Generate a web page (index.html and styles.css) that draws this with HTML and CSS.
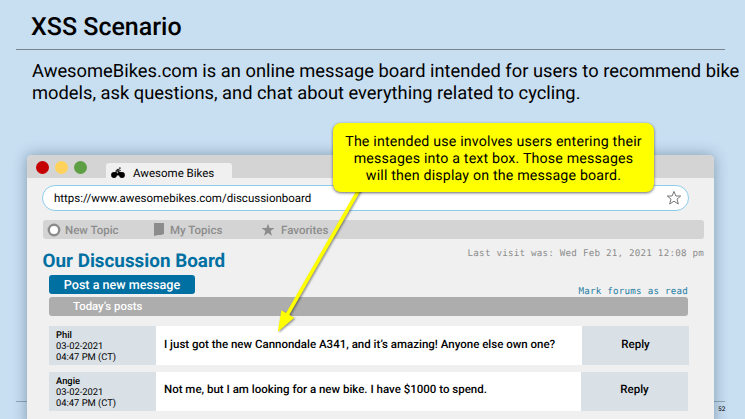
FILE: index.html
```html
<!DOCTYPE html>
<html lang="en">
<head>
<meta charset="utf-8">
<title>XSS Scenario</title>
<link rel="stylesheet" href="styles.css">
</head>
<body>
<main class="slide">
  <header class="slide-head"><h1><span>XSS Scenario</span></h1></header>
  <p class="intro"><span>AwesomeBikes.com is an online message board intended for users to recommend bike</span><br><span>models, ask questions, and chat about everything related to cycling.</span></p>

  <section class="window">
    <div class="tabbar">
      <i class="dot red"></i><i class="dot yellow"></i><i class="dot green"></i>
      <div class="tab">
        <svg class="bike" viewBox="0 0 14 12"><circle cx="3" cy="8" r="2.9"/><circle cx="11" cy="8" r="2.9"/><path d="M3 8 4.6 4.5 7.5 3.9 10.6 5.6 9.5 8.4H4.5z"/><path d="M4 4.2 6.4 1.7 8.6 2.1 7.4 4.8z" fill="#333"/><path d="M7.5 3 10 3.6" stroke="#222" stroke-width=".8"/><circle cx="8.9" cy="1.1" r=".9" fill="#333"/><path d="M5.4 5 6.6 4.6 7.4 5.8 6.3 6.4z" fill="#aaa"/></svg>
        <span>Awesome Bikes</span>
      </div>
    </div>
    <div class="page">
      <div class="url"><span>https://www.awesomebikes.com/discussionboard</span>
        <svg class="outline-star" viewBox="0 0 16 16"><path d="M8 1.4 9.9 6H14.7L11 9.1 12.3 14 8 11.2 3.7 14 5 9.1 1.3 6H6.1z"/></svg>
      </div>
      <nav class="nav">
        <div class="nav-item topic"><svg viewBox="0 0 14 14" width="14" height="14"><circle cx="7" cy="7" r="5.2" fill="#fff" stroke="#8c8c8c" stroke-width="2.4"/></svg><span>New Topic</span></div>
        <div class="nav-item mine"><svg viewBox="0 0 10 13" width="10" height="13"><path d="M0 0H10V11L7 12H4L0 13z" fill="#8c8c8c"/></svg><span>My Topics</span></div>
        <div class="nav-item fav"><svg viewBox="0 0 14 14" width="14" height="14"><path d="M7 .7 8.6 5.1H13.4L9.6 8 11 12.8 7 10 3 12.8 4.4 8 .6 5.1H5.4z" fill="#8c8c8c"/></svg><span>Favorites</span></div>
      </nav>
      <div class="title-row"><h2><span>Our Discussion Board</span></h2><span class="visit">Last visit was: Wed Feb 21, 2021 12:08 pm</span></div>
      <div class="actions"><div class="post-btn"><span>Post a new message</span></div><span class="mark">Mark forums as read</span></div>
      <div class="today"><span>Today’s posts</span></div>
      <article class="post">
        <div class="author"><b>Phil</b><br>03-02-2021<br>04:47 PM (CT)</div>
        <div class="message"><span>I just got the new Cannondale A341, and it’s amazing! Anyone else own one?</span></div>
        <div class="reply"><span>Reply</span></div>
      </article>
      <article class="post second">
        <div class="author"><b>Angie</b><br>03-02-2021<br>04:47 PM (CT)</div>
        <div class="message"><span>Not me, but I am looking for a new bike. I have $1000 to spend.</span></div>
        <div class="reply"><span>Reply</span></div>
      </article>
    </div>
  </section>

  <div class="foot-rule"></div>
  <div class="page-no">52</div>
  <svg class="arrow" viewBox="0 0 745 419"><path d="M360 188 286.5 316" stroke="#ff0" stroke-width="3.6"/><path d="M277.8 331.8 281.4 310.2 294.3 317.7z" fill="#ff0"/></svg>
  <aside class="callout">The intended use involves users entering their<br>messages into a text box. Those messages<br>will then display on the message board.</aside>
</main>
</body>
</html>
```
FILE: styles.css
```css
* { box-sizing: border-box; }
body { margin: 0; font-family: Roboto, "Liberation Sans", sans-serif; color: #000; text-rendering: geometricPrecision; }
h1, h2, p { margin: 0; }
svg { flex: none; display: block; }
span { white-space: nowrap; }
.slide { position: relative; width: 745px; height: 419px; overflow: hidden; background: #c8def1; display: flex; flex-direction: column; }
.slide-head { flex: none; height: 50px; margin: 0 20px 0 16px; padding: 12px 0 0 15px; border-bottom: 1px solid #78838c; }
h1 { font-size: 25px; line-height: 32px; font-weight: 500; }
.intro { flex: none; height: 105px; padding: 11px 0 0 32px; font-size: 18.32px; line-height: 22px; }
.window { position: relative; z-index: 1; flex: none; width: 687px; height: 275px; margin-left: 27px; background: #f0f0f0; border-radius: 5px 5px 0 0; box-shadow: 0 0 14px rgba(40, 70, 100, .45); }
.tabbar { height: 23px; display: flex; align-items: flex-start; background: #d4d4d4; border-radius: 5px 5px 0 0; padding-left: 9px; }
.dot { flex: none; width: 13px; height: 13px; margin: 6px 6px 0 0; border-radius: 50%; }
.red { background: #c60000; }
.yellow { background: #ffd35b; }
.green { background: #5e9e45; }
.tab { width: 126px; height: 15px; margin: 8px 0 0 13px; padding-left: 5px; background: #f0f0f0; border-radius: 3px 3px 0 0; display: flex; gap: 8px; font-size: 11.5px; line-height: 20px; }
.bike { width: 14px; height: 12px; margin-top: 4px; }
.page { padding: 7px 10px 0 15px; }
.url { width: 647px; height: 26px; border: 1px solid #8dcdec; border-radius: 13px; background: #fff; display: flex; align-items: center; justify-content: space-between; padding: 0 6px 0 11px; font-size: 11.5px; }
.outline-star { width: 16px; height: 16px; fill: none; stroke: #777; stroke-width: 1; }
.nav { height: 19px; margin: 9px 0 0 1px; background: #d4d4d4; border-radius: 3px; display: flex; align-items: center; padding-left: 4px; color: #8c8c8c; font-size: 11.5px; font-weight: 500; }
.nav-item { display: flex; align-items: center; }
.topic { width: 107px; gap: 4px; }
.mine { width: 107px; gap: 6px; }
.fav { gap: 6px; }
.title-row { display: flex; justify-content: space-between; height: 36px; }
h2 { padding: 10px 0 0 .5px; font-size: 18.85px; line-height: 25px; font-weight: 700; color: #0070a3; }
.visit, .mark { font-family: "DejaVu Sans Mono", "Liberation Mono", monospace; font-size: 9.2px; letter-spacing: .235px; line-height: 12px; }
.visit { padding-top: 9px; color: #8c8c8c; }
.actions { height: 22px; padding: 0 16px 0 7px; display: flex; justify-content: space-between; }
.post-btn { width: 146px; height: 19px; border-radius: 3px; background: #0070a3; color: #fff; text-align: center; font-size: 12.6px; line-height: 21px; font-weight: 500; }
.mark { padding-top: 11px; color: #247ca3; }
.today { width: 639px; height: 19px; margin-left: 7px; padding-left: 24px; border-radius: 3px; background: #adadad; color: #fff; font-size: 11.4px; line-height: 18px; font-weight: 500; }
.post { width: 640px; height: 39px; margin: 10px 0 0 7px; display: grid; grid-template-columns: 107px 426px 107px; background: #fff; }
.post.second { width: 639px; margin-top: 7px; grid-template-columns: 107px 425px 107px; }
.author { background: #d9e0e6; padding: 4px 0 0 7px; font-size: 9.4px; line-height: 11px; white-space: nowrap; }
.author b { font-weight: 500; }
.message, .reply { display: flex; align-items: center; font-size: 11.5px; font-weight: 500; padding-bottom: 3px; }
.message { padding-left: 8px; }
.second .message, .second .reply { padding-bottom: 5px; }
.reply { background: #d9e0e6; justify-content: center; }
.foot-rule { position: absolute; left: 16px; right: 20px; top: 401px; height: 1px; background: #91a4b3; }
.page-no { position: absolute; left: 718px; top: 404px; font-size: 6.5px; line-height: 10px; }
.arrow { position: absolute; inset: 0; z-index: 2; width: 745px; height: 419px; filter: drop-shadow(1px 1px 1px rgba(0, 0, 0, .45)); }
.callout { position: absolute; z-index: 3; left: 333px; top: 123px; width: 321px; height: 69px; padding-top: 11px; border-radius: 8px; background: #ff0; text-align: center; font-size: 14.2px; letter-spacing: .18px; line-height: 17px; white-space: nowrap; box-shadow: 0 1px 3px rgba(0, 0, 0, .6); }
```
